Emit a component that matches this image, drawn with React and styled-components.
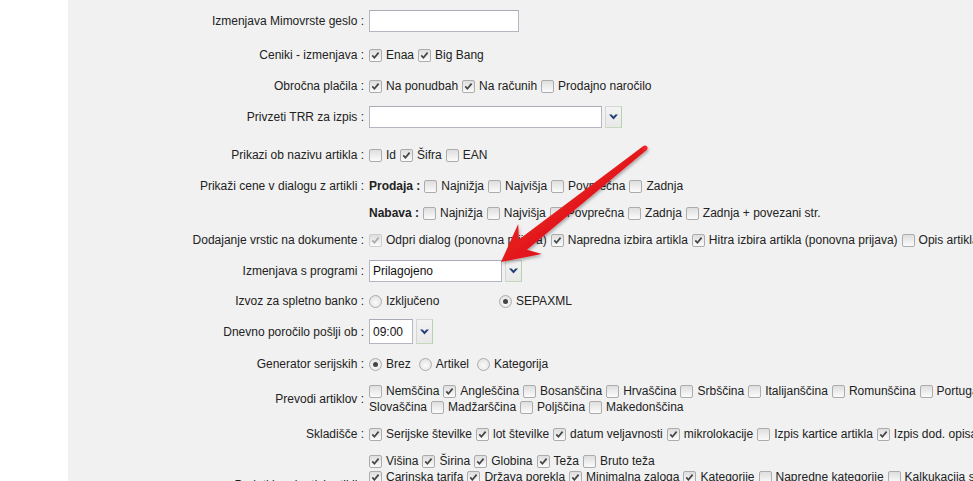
import React from "react";
import styled, { createGlobalStyle } from "styled-components";

const GlobalStyle = createGlobalStyle`
  html, body {
    margin: 0;
    padding: 0;
  }
  body {
    font-family: "Liberation Sans", Arial, sans-serif;
    font-size: 12px;
    color: #222;
    background: #ffffff;
    overflow: hidden;
  }
`;

const Page = styled.div`
  position: relative;
  display: flex;
  width: 973px;
  height: 481px;
  overflow: hidden;
`;

const Sidebar = styled.aside`
  flex: 0 0 68px;
  background: #ffffff;
`;

const Main = styled.main`
  flex: 1;
  min-width: 0;
  background: #f1f1f1;
  padding-top: 10px;
`;

const Row = styled.div`
  display: grid;
  grid-template-columns: 296px max-content;
  column-gap: 5px;
  align-items: center;
  padding-top: ${({ $pt }) => $pt || 0}px;
`;

const Label = styled.div`
  text-align: right;
  line-height: 16px;
  white-space: nowrap;
`;

const Controls = styled.div`
  display: flex;
  flex-direction: column;
`;

const Line = styled.div`
  display: flex;
  align-items: center;
  height: 16px;
  white-space: nowrap;
`;

const Option = styled.label`
  display: inline-flex;
  align-items: center;
  margin-right: ${({ $gap }) => ($gap != null ? $gap : 4)}px;
  min-width: ${({ $w }) => ($w ? `${$w}px` : "auto")};
`;

const Box = styled.span`
  box-sizing: border-box;
  flex: none;
  display: inline-flex;
  align-items: center;
  justify-content: center;
  width: 13px;
  height: 13px;
  margin-right: 4px;
  border: 1px solid ${({ $disabled }) => ($disabled ? "#cdcdcd" : "#acacac")};
  border-radius: 2px;
  background: linear-gradient(#dedede, #fbfbfb);
`;

const Round = styled.span`
  box-sizing: border-box;
  flex: none;
  display: inline-flex;
  align-items: center;
  justify-content: center;
  width: 13px;
  height: 13px;
  margin-right: 4px;
  border: 1px solid #acacac;
  border-radius: 50%;
  background: radial-gradient(circle at 50% 60%, #fbfbfb, #dcdcdc);

  &::after {
    content: "";
    display: ${({ $checked }) => ($checked ? "block" : "none")};
    width: 5px;
    height: 5px;
    border-radius: 50%;
    background: #444;
  }
`;

const Strong = styled.span`
  font-weight: bold;
  margin-right: 4px;
`;

const Field = styled.div`
  box-sizing: border-box;
  display: flex;
  align-items: center;
  width: ${({ $w }) => $w}px;
  height: ${({ $h }) => $h || 22}px;
  padding: 0 3px;
  background: #ffffff;
  border: 1px solid #b4b7c2;
  border-top-color: #a8abb8;
  color: #111;
  font-size: 12px;
`;

const Select = styled.div`
  display: flex;
  align-items: center;
  gap: 3px;
`;

const DropButton = styled.div`
  box-sizing: border-box;
  display: flex;
  align-items: center;
  justify-content: center;
  width: 17px;
  height: ${({ $h }) => $h || 22}px;
  background: linear-gradient(#f3f3f3, #e8e8e8);
  border: 1px solid #d6d6d6;
  border-right-color: #b4d4aa;
  border-bottom-color: #c4d8bc;
`;

const ArrowLayer = styled.svg`
  position: absolute;
  top: 0;
  left: 0;
  pointer-events: none;
`;

function Check({ checked, disabled }) {
  return (
    <Box $disabled={disabled}>
      {checked && (
        <svg width="11" height="11" viewBox="0 0 11 11">
          <path
            d="M2.3 5.4 L4.4 7.8 L8.6 2.6"
            fill="none"
            stroke={disabled ? "#ababab" : "#444"}
            strokeWidth="1.7"
          />
        </svg>
      )}
    </Box>
  );
}

function Chevron() {
  return (
    <svg width="9" height="6" viewBox="0 0 9 6">
      <polygon points="0,0.5 2.6,0.5 4.5,2.6 6.4,0.5 9,0.5 4.5,5.5" fill="#243f78" />
    </svg>
  );
}

function Checks({ items }) {
  return items.map(([text, checked, disabled], i) => (
    <Option key={i}>
      <Check checked={checked} disabled={disabled} />
      {text}
    </Option>
  ));
}

function Radios({ items, widths = [] }) {
  return items.map(([text, checked], i) => (
    <Option key={i} $gap={8} $w={widths[i]}>
      <Round $checked={checked} />
      {text}
    </Option>
  ));
}

// red annotation arrow
const TAIL = [645, 148];
const TIP = [501, 262];

function arrowPoints() {
  const dx = TIP[0] - TAIL[0];
  const dy = TIP[1] - TAIL[1];
  const len = Math.hypot(dx, dy);
  const u = [dx / len, dy / len];
  const n = [u[1], -u[0]];
  const at = (back, side) => [
    TIP[0] - u[0] * back + n[0] * side,
    TIP[1] - u[1] * back + n[1] * side,
  ];
  const pts = [
    [TAIL[0] + n[0] * 2.5, TAIL[1] + n[1] * 2.5],
    at(28, 6.5),
    at(37, 19),
    TIP,
    at(37, -19),
    at(28, -6.5),
    [TAIL[0] - n[0] * 2.5, TAIL[1] - n[1] * 2.5],
  ];
  return pts.map((p) => p.map((v) => v.toFixed(1)).join(",")).join(" ");
}

function Arrow() {
  return (
    <ArrowLayer width="973" height="481" viewBox="0 0 973 481">
      <defs>
        <filter id="shadow" x="-20%" y="-20%" width="140%" height="140%">
          <feDropShadow dx="1" dy="2" stdDeviation="1.4" floodColor="#000" floodOpacity="0.3" />
        </filter>
        <linearGradient id="red" x1="0" y1="0" x2="1" y2="1">
          <stop offset="0" stopColor="#f2262a" />
          <stop offset="1" stopColor="#d40d12" />
        </linearGradient>
      </defs>
      <g filter="url(#shadow)">
        <polygon points={arrowPoints()} fill="url(#red)" />
        <circle cx={TAIL[0]} cy={TAIL[1]} r="2.5" fill="#f2262a" />
      </g>
    </ArrowLayer>
  );
}

export default function App() {
  return (
    <Page>
      <GlobalStyle />
      <Sidebar />
      <Main>
        <Row>
          <Label>Izmenjava Mimovrste geslo :</Label>
          <Controls>
            <Field $w={150} />
          </Controls>
        </Row>

        <Row $pt={15}>
          <Label>Ceniki - izmenjava :</Label>
          <Line>
            <Checks items={[["Enaa", true], ["Big Bang", true]]} />
          </Line>
        </Row>

        <Row $pt={15}>
          <Label>Obročna plačila :</Label>
          <Line>
            <Checks
              items={[
                ["Na ponudbah", true],
                ["Na računih", true],
                ["Prodajno naročilo", false],
              ]}
            />
          </Line>
        </Row>

        <Row $pt={12}>
          <Label>Privzeti TRR za izpis :</Label>
          <Select>
            <Field $w={233} />
            <DropButton>
              <Chevron />
            </DropButton>
          </Select>
        </Row>

        <Row $pt={19}>
          <Label>Prikazi ob nazivu artikla :</Label>
          <Line>
            <Checks items={[["Id", false], ["Šifra", true], ["EAN", false]]} />
          </Line>
        </Row>

        <Row $pt={15}>
          <Label>Prikaži cene v dialogu z artikli :</Label>
          <Line>
            <Strong>Prodaja :</Strong>
            <Checks
              items={[
                ["Najnižja", false],
                ["Najvišja", false],
                ["Povprečna", false],
                ["Zadnja", false],
              ]}
            />
          </Line>
        </Row>

        <Row $pt={11}>
          <Label />
          <Line>
            <Strong>Nabava :</Strong>
            <Checks
              items={[
                ["Najnižja", false],
                ["Najvišja", false],
                ["Povprečna", false],
                ["Zadnja", false],
                ["Zadnja + povezani str.", false],
              ]}
            />
          </Line>
        </Row>

        <Row $pt={11}>
          <Label>Dodajanje vrstic na dokumente :</Label>
          <Line>
            <Checks
              items={[
                ["Odpri dialog (ponovna prijava)", true, true],
                ["Napredna izbira artikla", true],
                ["Hitra izbira artikla (ponovna prijava)", true],
                ["Opis artikla", false],
              ]}
            />
          </Line>
        </Row>

        <Row $pt={12}>
          <Label>Izmenjava s programi :</Label>
          <Select>
            <Field $w={133}>Prilagojeno</Field>
            <DropButton>
              <Chevron />
            </DropButton>
          </Select>
        </Row>

        <Row $pt={11}>
          <Label>Izvoz za spletno banko :</Label>
          <Line>
            <Radios
              items={[["Izključeno", false], ["SEPAXML", true]]}
              widths={[122]}
            />
          </Line>
        </Row>

        <Row $pt={10}>
          <Label>Dnevno poročilo pošlji ob :</Label>
          <Select>
            <Field $w={44} $h={25}>09:00</Field>
            <DropButton $h={25}>
              <Chevron />
            </DropButton>
          </Select>
        </Row>

        <Row $pt={12}>
          <Label>Generator serijskih :</Label>
          <Line>
            <Radios
              items={[["Brez", true], ["Artikel", false], ["Kategorija", false]]}
            />
          </Line>
        </Row>

        <Row $pt={11}>
          <Label>Prevodi artiklov :</Label>
          <Controls>
            <Line>
              <Checks
                items={[
                  ["Nemščina", false],
                  ["Angleščina", true],
                  ["Bosanščina", false],
                  ["Hrvaščina", false],
                  ["Srbščina", false],
                  ["Italijanščina", false],
                  ["Romunščina", false],
                  ["Portugalščina", false],
                ]}
              />
            </Line>
            <Line>
              <Option>Slovaščina</Option>
              <Checks
                items={[
                  ["Madžarščina", false],
                  ["Poljščina", false],
                  ["Makedonščina", false],
                ]}
              />
            </Line>
          </Controls>
        </Row>

        <Row $pt={11}>
          <Label>Skladišče :</Label>
          <Line>
            <Checks
              items={[
                ["Serijske številke", true],
                ["lot številke", true],
                ["datum veljavnosti", true],
                ["mikrolokacije", true],
                ["Izpis kartice artikla", false],
                ["Izpis dod. opisa", true],
              ]}
            />
          </Line>
        </Row>

        <Row $pt={11}>
          <Label>Podatki na kartici artikli :</Label>
          <Controls>
            <Line>
              <Checks
                items={[
                  ["Višina", true],
                  ["Širina", true],
                  ["Globina", true],
                  ["Teža", true],
                  ["Bruto teža", false],
                ]}
              />
            </Line>
            <Line>
              <Checks
                items={[
                  ["Carinska tarifa", true],
                  ["Država porekla", true],
                  ["Minimalna zaloga", true],
                  ["Kategorije", true],
                  ["Napredne kategorije", false],
                  ["Kalkukacija s faktorjem", false],
                ]}
              />
            </Line>
            <Line>
              <Checks items={[["Dobavitelj", false], ["Proizvajalec", false]]} />
            </Line>
            <Line>
              <Checks items={[["Embalaža", false]]} />
            </Line>
          </Controls>
        </Row>
      </Main>
      <Arrow />
    </Page>
  );
}
